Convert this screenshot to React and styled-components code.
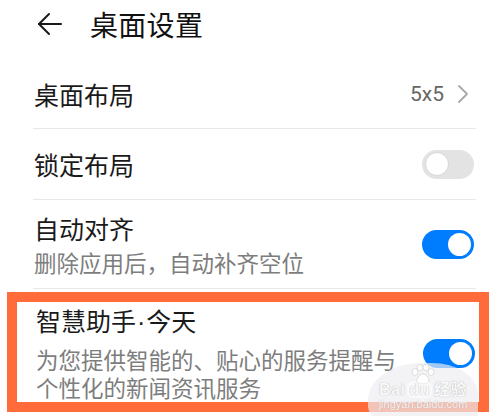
import React, {useState} from 'react'
import styled, {createGlobalStyle} from 'styled-components'

const GlobalStyle = createGlobalStyle`
  body {
    margin: 0;
    background: #ffffff;
    font-family: "Noto Sans CJK SC", "Noto Sans", sans-serif;
  }
`

const App = () => {
  const [autoAlign, setAutoAlign] = useState(true)
  const [today, setToday] = useState(true)
  const [locked, setLocked] = useState(false)

  return (
    <Page>
      <GlobalStyle />
      <Header>
        <BackButton>
          <svg width="26" height="24" viewBox="0 0 26 24" fill="none" stroke="#1a1a1a" strokeWidth="2" strokeLinecap="round" strokeLinejoin="round">
            <path d="M24 12H2" />
            <path d="M12 2L2 12l10 10" />
          </svg>
        </BackButton>
        <Title>桌面设置</Title>
      </Header>

      <List>
        <Row height={68}>
          <TextBlock>
            <Label>桌面布局</Label>
          </TextBlock>
          <Value>5x5</Value>
          <Chevron>
            <svg width="12" height="20" viewBox="0 0 12 20" fill="none" stroke="#a8a8a8" strokeWidth="1.8" strokeLinecap="round" strokeLinejoin="round">
              <path d="M2 2l8 8-8 8" />
            </svg>
          </Chevron>
        </Row>
        <Divider />

        <Row height={70}>
          <TextBlock>
            <Label>锁定布局</Label>
          </TextBlock>
          <Toggle on={locked} onClick={() => setLocked(!locked)} />
        </Row>
        <Divider />

        <Row padded>
          <TextBlock>
            <Label>自动对齐</Label>
            <Sub>删除应用后，自动补齐空位</Sub>
          </TextBlock>
          <Toggle on={autoAlign} onClick={() => setAutoAlign(!autoAlign)} />
        </Row>
        <Divider />

        <Highlight>
          <Row>
            <TextBlock>
              <Label>智慧助手<Dot>·</Dot>今天</Label>
              <Sub>为您提供智能的、贴心的服务提醒与个性化的新闻资讯服务</Sub>
            </TextBlock>
            <Toggle on={today} onClick={() => setToday(!today)} />
          </Row>
        </Highlight>
      </List>

      <Watermark>
        <Paw>
          <svg width="26" height="20" viewBox="0 0 26 20" fill="rgba(255,255,255,0.9)" stroke="rgba(150,150,150,0.35)" strokeWidth="0.8">
            <ellipse cx="5" cy="8" rx="3" ry="3.5" />
            <ellipse cx="10" cy="3.5" rx="3" ry="3.2" />
            <ellipse cx="16" cy="3.5" rx="3" ry="3.2" />
            <ellipse cx="21" cy="8" rx="3" ry="3.5" />
            <path d="M7 17c0-4 3-7 6-7s6 3 6 7c0 2-2 2.5-6 2.5S7 19 7 17z" />
          </svg>
        </Paw>
        <Brand>Bai<Du>du</Du>经验</Brand>
        <Url>jingyan.baidu.com</Url>
      </Watermark>
    </Page>
  )
}

export default App

const Page = styled.div`
  position: relative;
  width: 500px;
  height: 416px;
  overflow: hidden;
  background: #fff;
`

const Header = styled.div`
  display: flex;
  align-items: center;
  height: 48px;
  padding-left: 37px;
  margin-bottom: 12px;
`

const BackButton = styled.div`
  display: flex;
  align-items: center;
  width: 26px;
  height: 24px;
  margin-right: 27px;
`

const Title = styled.div`
  font-size: 28px;
  font-weight: 400;
  color: #111;
  letter-spacing: 0.3px;
`

const List = styled.div`
  padding: 0 25px 0 33px;
`

const Row = styled.div`
  display: flex;
  align-items: center;
  gap: 10px;
  height: ${p => (p.height ? `${p.height}px` : 'auto')};
  padding: ${p => (p.padded ? '13px 0 12px' : '0')};
`

const TextBlock = styled.div`
  flex: 1;
  max-width: 368px;
  padding-left: 1px;
`

const Label = styled.div`
  font-size: 25px;
  line-height: 30px;
  color: #1a1a1a;
`

const Dot = styled.span`
  font-family: "Liberation Sans", sans-serif;
  margin: 0 1px;
`

const Sub = styled.div`
  margin-top: 5px;
  font-size: 22.5px;
  line-height: 28px;
  color: #7d7d7d;
`

const Value = styled.div`
  margin-left: auto;
  font-family: "Roboto", "Liberation Sans", sans-serif;
  font-size: 21px;
  color: #666;
  margin-right: 3px;
`

const Chevron = styled.div`
  display: flex;
  margin-right: 6px;
`

const Divider = styled.div`
  height: 1px;
  background: #e8e8e8;
  margin-right: -1px;
`

const Toggle = styled.div`
  position: relative;
  flex: none;
  width: 52px;
  height: 29px;
  margin-left: auto;
  margin-right: 1px;
  border-radius: 15px;
  background: ${p => (p.on ? '#007dff' : '#e3e3e3')};
  cursor: pointer;

  &::after {
    content: '';
    position: absolute;
    top: ${p => (p.on ? '3px' : '2.5px')};
    left: ${p => (p.on ? '26px' : '2.5px')};
    width: ${p => (p.on ? '23px' : '24px')};
    height: ${p => (p.on ? '23px' : '24px')};
    box-sizing: border-box;
    border-radius: 50%;
    background: #fff;
    border: ${p => (p.on ? 'none' : '1px solid #d6d6d6')};
  }
`

const Highlight = styled.div`
  margin: 3px -14px 0 -26px;
  border: 10px solid #ff6b3b;
  padding: 3px 3px 1px 18px;

  ${Sub} {
    margin-top: 8px;
  }
`

const Watermark = styled.div`
  position: absolute;
  left: 368px;
  top: 363px;
  width: 110px;
  height: 62px;
  border-radius: 48% 42% 20% 30% / 60% 50% 20% 30%;
  background: rgba(238, 238, 242, 0.68);
  display: flex;
  flex-direction: column;
  align-items: center;
`

const Paw = styled.div`
  margin-top: 1px;
  height: 17px;
`

const Brand = styled.div`
  font-family: "Liberation Sans", "Noto Sans CJK SC", sans-serif;
  font-size: 16px;
  font-weight: bold;
  line-height: 17px;
  color: rgba(255, 255, 255, 0.95);
  text-shadow: 0 0 1px rgba(120, 120, 120, 0.7);
  letter-spacing: 0.5px;
`

const Du = styled.span`
  display: inline-block;
  margin: 0 2px;
  padding: 0 2px;
  border-radius: 6px;
  background: rgba(255, 255, 255, 0.5);
`

const Url = styled.div`
  font-family: "Liberation Sans", sans-serif;
  font-size: 11px;
  line-height: 13px;
  color: rgba(255, 255, 255, 0.9);
  text-shadow: 0 0 1px rgba(120, 120, 120, 0.5);
`
